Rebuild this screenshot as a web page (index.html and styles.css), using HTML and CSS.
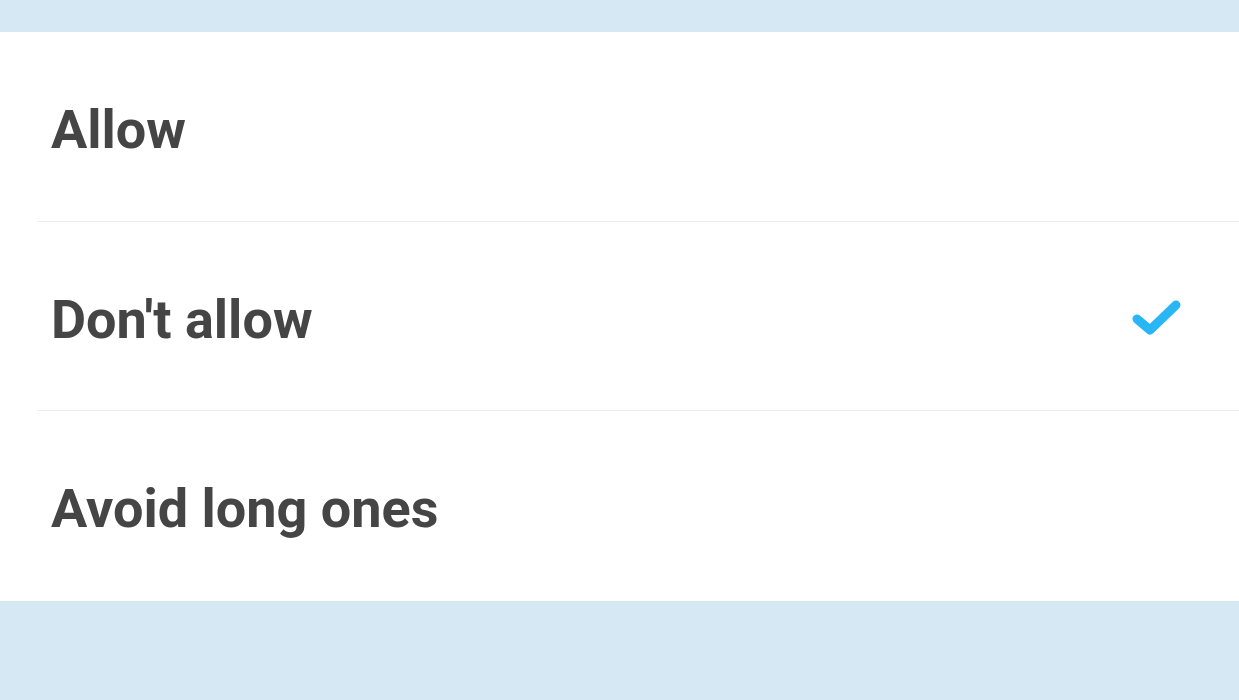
FILE: index.html
```html
<!DOCTYPE html>
<html lang="en">
<head>
  <meta charset="utf-8">
  <meta name="viewport" content="width=device-width, initial-scale=1">
  <title>Options</title>
  <link rel="stylesheet" href="styles.css">
</head>
<body>

  <div class="sheet">
    <div class="option">
      <span class="option_label">Allow</span>
    </div>
    <div class="option option-selected">
      <span class="option_label">Don't allow</span>
      <svg class="option_check" width="56" height="44" viewBox="0 0 56 44">
        <path d="M6 22 L19 33 L45 8" fill="none" stroke="#29b6f4" stroke-width="9" stroke-linecap="round" stroke-linejoin="round"/>
      </svg>
    </div>
    <div class="option">
      <span class="option_label">Avoid long ones</span>
    </div>
  </div>

</body>
</html>
```

FILE: styles.css
```css
html,
body {
  height: 100%;
}

body {
  margin: 0;
  padding-top: 32px;
  box-sizing: border-box;
  background: #d5e8f4;
  font-family: Roboto, "Liberation Sans", sans-serif;
}

.sheet {
  background: #fff;
  padding-left: 37px;
  padding-bottom: 2px;
}

.option {
  height: 189px;
  display: flex;
  align-items: center;
  justify-content: space-between;
  padding-left: 14px;
  padding-right: 52px;
  border-top: 1px solid #ececec;
  box-sizing: border-box;
}
.option:first-child {
  border-top: 0;
}

.option_label {
  font-size: 54px;
  font-weight: bold;
  color: #454545;
  padding-top: 6px;
}

.option_check {
  display: block;
  margin-top: 6px;
}
```
